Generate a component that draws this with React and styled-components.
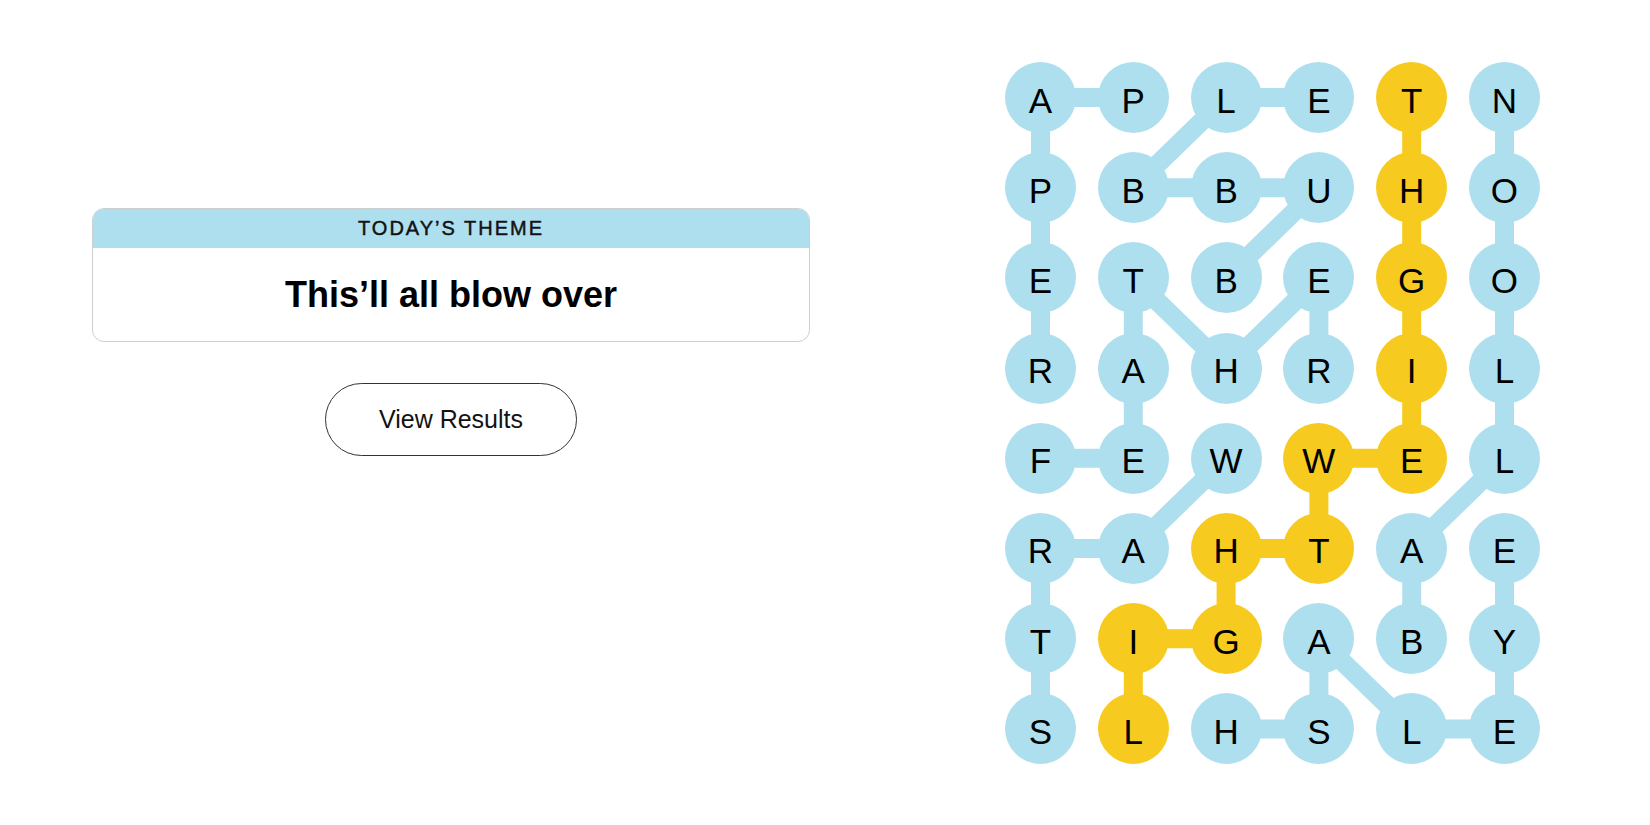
import React from "react";
import styled, { createGlobalStyle } from "styled-components";

const CELL = 71;
const COL_GAP = 21.8;
const ROW_GAP = 19.2;

const BLUE = "#aedfee";
const YELLOW = "#f7ca1f";

const ROWS = [
  "APLETN",
  "PBBUHO",
  "ETBEGO",
  "RAHRIL",
  "FEWWEL",
  "RAHTAE",
  "TIGABY",
  "SLHSLE",
];

const WORDS = [
  { name: "PAPER", path: [[0, 1], [0, 0], [1, 0], [2, 0], [3, 0]] },
  { name: "FEATHER", path: [[4, 0], [4, 1], [3, 1], [2, 1], [3, 2], [2, 3], [3, 3]] },
  { name: "BUBBLE", path: [[2, 2], [1, 3], [1, 2], [1, 1], [0, 2], [0, 3]] },
  { name: "BALLOON", path: [[6, 4], [5, 4], [4, 5], [3, 5], [2, 5], [1, 5], [0, 5]] },
  { name: "STRAW", path: [[7, 0], [6, 0], [5, 0], [5, 1], [4, 2]] },
  { name: "EYELASH", path: [[5, 5], [6, 5], [7, 5], [7, 4], [6, 3], [7, 3], [7, 2]] },
  {
    name: "LIGHTWEIGHT",
    spangram: true,
    path: [[7, 1], [6, 1], [6, 2], [5, 2], [5, 3], [4, 3], [4, 4], [3, 4], [2, 4], [1, 4], [0, 4]],
  },
];

const GlobalStyle = createGlobalStyle`
  body {
    margin: 0;
    background: #fff;
    font-family: "Liberation Sans", Arial, sans-serif;
    color: #000;
  }
`;

const Page = styled.main`
  display: flex;
  align-items: flex-start;
  padding: 62px 0 0 92px;
`;

const LeftPanel = styled.section`
  width: 718px;
  margin-top: 146px;
  display: flex;
  flex-direction: column;
  align-items: center;
`;

const ThemeCard = styled.div`
  width: 100%;
  box-sizing: border-box;
  border: 1px solid #cfcfcf;
  border-radius: 12px;
  overflow: hidden;
`;

const CardHeader = styled.div`
  height: 39px;
  background: ${BLUE};
  display: flex;
  align-items: center;
  justify-content: center;
  font-size: 20px;
  letter-spacing: 2px;
  color: #121212;
  -webkit-text-stroke: 0.45px #121212;
  text-transform: uppercase;
`;

const CardBody = styled.div`
  height: 93px;
  display: flex;
  align-items: center;
  justify-content: center;
  font-size: 36px;
  font-weight: 700;
  color: #000;
`;

const ResultsButton = styled.button`
  margin-top: 41px;
  width: 252px;
  height: 73px;
  border: 1px solid #333;
  border-radius: 999px;
  background: #fff;
  font-family: "Liberation Sans", Arial, sans-serif;
  font-size: 25px;
  color: #121212;
  cursor: pointer;
`;

const Board = styled.div`
  position: relative;
  margin-left: 195px;
`;

const Lines = styled.svg`
  position: absolute;
  left: 0;
  top: 0;
  z-index: 0;
`;

const LetterGrid = styled.div`
  position: relative;
  z-index: 1;
  display: grid;
  grid-template-columns: repeat(6, ${CELL}px);
  grid-auto-rows: ${CELL}px;
  column-gap: ${COL_GAP}px;
  row-gap: ${ROW_GAP}px;
`;

const Letter = styled.div`
  width: ${CELL}px;
  height: ${CELL}px;
  border-radius: 50%;
  background: ${(p) => (p.$spangram ? YELLOW : BLUE)};
  display: flex;
  align-items: center;
  justify-content: center;
  box-sizing: border-box;
  padding-top: 6px;
  font-size: 35px;
  color: #000;
`;

function center([r, c]) {
  return [CELL / 2 + c * (CELL + COL_GAP), CELL / 2 + r * (CELL + ROW_GAP)];
}

export default function App() {
  const spangramCells = new Set();
  WORDS.filter((w) => w.spangram).forEach((w) =>
    w.path.forEach(([r, c]) => spangramCells.add(r + "-" + c))
  );

  const width = 5 * (CELL + COL_GAP) + CELL;
  const height = 7 * (CELL + ROW_GAP) + CELL;

  return (
    <>
      <GlobalStyle />
      <Page>
        <LeftPanel>
          <ThemeCard>
            <CardHeader>Today’s theme</CardHeader>
            <CardBody>This’ll all blow over</CardBody>
          </ThemeCard>
          <ResultsButton>View Results</ResultsButton>
        </LeftPanel>

        <Board>
          <Lines width={width} height={height}>
            {WORDS.map((w) => (
              <polyline
                key={w.name}
                points={w.path.map((p) => center(p).join(",")).join(" ")}
                fill="none"
                stroke={w.spangram ? YELLOW : BLUE}
                strokeWidth="19"
                strokeLinejoin="round"
              />
            ))}
          </Lines>
          <LetterGrid>
            {ROWS.map((row, r) =>
              row.split("").map((ch, c) => (
                <Letter key={r + "-" + c} $spangram={spangramCells.has(r + "-" + c)}>
                  {ch}
                </Letter>
              ))
            )}
          </LetterGrid>
        </Board>
      </Page>
    </>
  );
}
